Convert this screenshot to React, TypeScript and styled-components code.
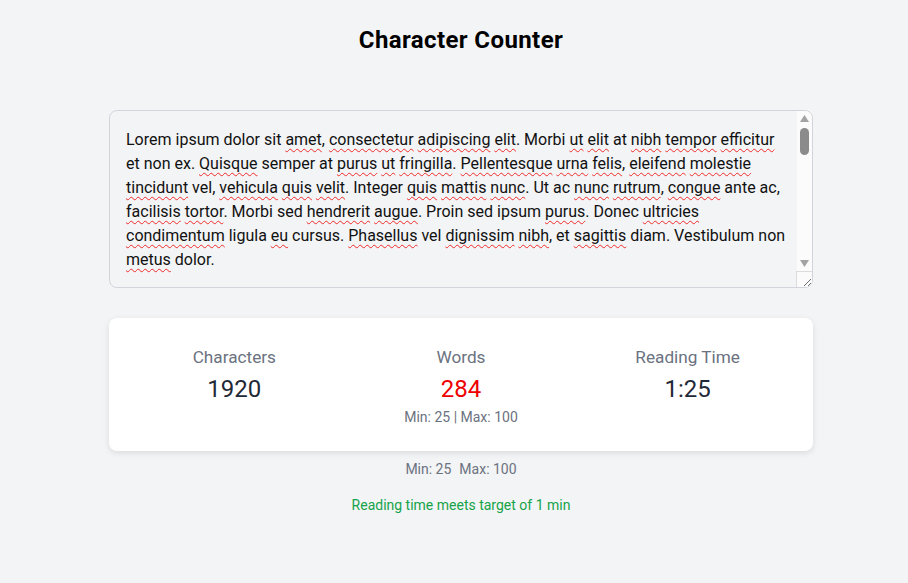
import React, { useRef, useState } from "react";
import styled, { createGlobalStyle } from "styled-components";

const GlobalStyle = createGlobalStyle`
  html, body {
    margin: 0;
    padding: 0;
    background: #f3f4f6;
  }
  body {
    font-family: Roboto, "Liberation Sans", sans-serif;
    color: #111827;
  }
`;

const Page = styled.main`
  min-height: 583px;
  box-sizing: border-box;
  display: flex;
  flex-direction: column;
  align-items: center;
  padding: 24px 0 24px 14px;
`;

const Title = styled.h1`
  margin: 0 0 54px;
  font-size: 24px;
  line-height: 32px;
  font-weight: 700;
  letter-spacing: 0.4px;
  color: #000;
`;

const Container = styled.div`
  width: 704px;
  display: flex;
  flex-direction: column;
  align-items: stretch;
`;

const EditorFrame = styled.div`
  box-sizing: border-box;
  height: 178px;
  border: 1px solid #d1d5db;
  border-radius: 8px;
  background: #f3f4f6;
  display: flex;
  overflow: hidden;
`;

const Editor = styled.div`
  flex: 1;
  min-width: 0;
  box-sizing: border-box;
  padding: 17px 9px 16px 16px;
  font-size: 16px;
  line-height: 24px;
  color: #111;
  overflow-y: auto;
  outline: none;
  white-space: pre-wrap;
  word-wrap: break-word;
  scrollbar-width: none;
  &::-webkit-scrollbar {
    display: none;
  }
`;

const ScrollBar = styled.div`
  width: 15px;
  flex: none;
  display: flex;
  flex-direction: column;
  background: #fbfbfb;
`;

const ArrowButton = styled.div`
  height: 15px;
  flex: none;
  display: flex;
  align-items: center;
  justify-content: center;
`;

const Track = styled.div`
  flex: 1;
  padding: 2px 3px 0 3px;
  display: flex;
  flex-direction: column;
`;

const Thumb = styled.div`
  height: 27px;
  border-radius: 5px;
  background: #8b8b8b;
`;

const Corner = styled.div`
  height: 16px;
  flex: none;
  box-sizing: border-box;
  border-top: 1px solid #dcdcdc;
  border-left: 1px solid #dcdcdc;
  margin-left: -1px;
  background: #fbfbfb;
  display: flex;
  align-items: flex-end;
  justify-content: flex-end;
`;

const Misspelled = styled.span`
  text-decoration: underline wavy #ef2b2b;
  text-decoration-thickness: 1px;
  text-underline-offset: 3px;
  text-decoration-skip-ink: none;
`;

const Card = styled.section`
  margin-top: 30px;
  background: #fff;
  border-radius: 8px;
  box-shadow: 0 2px 6px rgba(0, 0, 0, 0.1);
  padding: 26px 24px 24px;
  display: grid;
  grid-template-columns: repeat(3, 1fr);
  gap: 24px;
`;

const Stat = styled.div`
  display: flex;
  flex-direction: column;
  align-items: center;
  text-align: center;
`;

const Label = styled.div`
  font-size: 17.2px;
  line-height: 27px;
  color: #6b7280;
`;

const Value = styled.div<{ $warn?: boolean }>`
  font-size: 24px;
  line-height: 36px;
  color: ${(p) => (p.$warn ? "#ee0000" : "#1f2937")};
`;

const Sub = styled.div`
  font-size: 14px;
  line-height: 20px;
  color: #6b7280;
`;

const Limits = styled.div`
  margin-top: 8px;
  display: flex;
  justify-content: center;
  gap: 8px;
  font-size: 14px;
  line-height: 20px;
  color: #6b7280;
`;

const Status = styled.div`
  margin-top: 16px;
  text-align: center;
  font-size: 14px;
  line-height: 20px;
  color: #16a34a;
`;

const MISSPELLED = new Set([
  "amet", "consectetur", "adipiscing", "elit", "ut", "nibh", "tempor", "efficitur",
  "Quisque", "purus", "fringilla", "Pellentesque", "urna", "felis", "eleifend", "molestie",
  "tincidunt", "vehicula", "quis", "velit", "mattis", "nunc", "rutrum", "congue",
  "facilisis", "tortor", "hendrerit", "augue", "ultricies", "condimentum", "eu",
  "Phasellus", "dignissim", "sagittis", "metus", "Nullam", "Aenean", "lacinia",
  "Curabitur", "Vivamus", "Nam", "Fusce", "Etiam", "Cras", "mauris", "sapien",
  "lectus", "Suspendisse", "Maecenas", "Praesent", "Nunc", "Mauris", "Aliquam",
]);

const TEXT = `Lorem ipsum dolor sit amet, consectetur adipiscing elit. Morbi ut elit at nibh tempor efficitur et non ex. Quisque semper at purus ut fringilla. Pellentesque urna felis, eleifend molestie tincidunt vel, vehicula quis velit. Integer quis mattis nunc. Ut ac nunc rutrum, congue ante ac, facilisis tortor. Morbi sed hendrerit augue. Proin sed ipsum purus. Donec ultricies condimentum ligula eu cursus. Phasellus vel dignissim nibh, et sagittis diam. Vestibulum non metus dolor.

Nullam vitae lectus a lorem pharetra tincidunt. Aenean lacinia, sapien non rutrum viverra, mauris nisi dictum lorem, at feugiat augue neque vel velit. Curabitur egestas nunc a sem luctus, at hendrerit lectus facilisis. Vivamus sed tortor quis eros tempor fermentum. Nam consequat est ut lorem convallis, non accumsan nibh porta. Fusce at dignissim massa, nec volutpat orci.

Etiam ultricies magna eu ipsum dapibus, sit amet gravida purus molestie. Cras ac ligula vel sapien posuere blandit. Suspendisse potenti. Maecenas in tellus sed leo aliquet pulvinar. Praesent ut mi nec orci vulputate placerat. Nunc pretium, mi vel rhoncus finibus, turpis elit bibendum justo, ac tempus ex lacus at ante. Mauris semper libero sed urna ultrices, eu aliquam mauris hendrerit.

Aliquam erat volutpat. Sed venenatis, erat a luctus facilisis, dui lorem sagittis nulla, vitae rhoncus metus tortor eget magna. Integer vulputate tortor quis nisi commodo, id tempor ligula feugiat. Donec interdum felis vel orci finibus, in efficitur sem mattis. Vestibulum ante ipsum primis in faucibus orci luctus et ultrices posuere cubilia curae.`;

function renderText(text: string) {
  const parts = text.split(/(\p{L}+)/u);
  return parts.map((part, i) =>
    MISSPELLED.has(part) ? <Misspelled key={i}>{part}</Misspelled> : <React.Fragment key={i}>{part}</React.Fragment>
  );
}

const UpArrow = () => (
  <svg width="9" height="7" viewBox="0 0 9 7" aria-hidden="true">
    <polygon points="4.5,0 9,7 0,7" fill="#a3a3a3" />
  </svg>
);

const DownArrow = () => (
  <svg width="9" height="7" viewBox="0 0 9 7" aria-hidden="true">
    <polygon points="0,0 9,0 4.5,7" fill="#a3a3a3" />
  </svg>
);

const Grip = () => (
  <svg width="13" height="13" viewBox="0 0 13 13" aria-hidden="true">
    <path d="M12 5 L5 12 M12 9 L9 12" stroke="#6f6f6f" strokeWidth="1" fill="none" />
  </svg>
);

export default function App() {
  const editorRef = useRef<HTMLDivElement>(null);
  const [thumbOffset, setThumbOffset] = useState(0);

  const onScroll = () => {
    const el = editorRef.current;
    if (!el) return;
    const max = el.scrollHeight - el.clientHeight;
    const travel = el.clientHeight - 2 * 15 - 16 - 2 - 27;
    setThumbOffset(max > 0 ? (el.scrollTop / max) * travel : 0);
  };

  return (
    <>
      <GlobalStyle />
      <Page>
        <Title>Character Counter</Title>
        <Container>
          <EditorFrame>
            <Editor
              ref={editorRef}
              role="textbox"
              aria-multiline="true"
              contentEditable
              suppressContentEditableWarning
              spellCheck
              onScroll={onScroll}
            >
              {renderText(TEXT)}
            </Editor>
            <ScrollBar aria-hidden="true">
              <ArrowButton>
                <UpArrow />
              </ArrowButton>
              <Track>
                <Thumb style={{ marginTop: thumbOffset }} />
              </Track>
              <ArrowButton>
                <DownArrow />
              </ArrowButton>
              <Corner>
                <Grip />
              </Corner>
            </ScrollBar>
          </EditorFrame>
          <Card>
            <Stat>
              <Label>Characters</Label>
              <Value>1920</Value>
            </Stat>
            <Stat>
              <Label>Words</Label>
              <Value $warn>284</Value>
              <Sub>Min: 25 | Max: 100</Sub>
            </Stat>
            <Stat>
              <Label>Reading Time</Label>
              <Value>1:25</Value>
            </Stat>
          </Card>
          <Limits>
            <span>Min: 25</span>
            <span>Max: 100</span>
          </Limits>
          <Status>Reading time meets target of 1 min</Status>
        </Container>
      </Page>
    </>
  );
}
